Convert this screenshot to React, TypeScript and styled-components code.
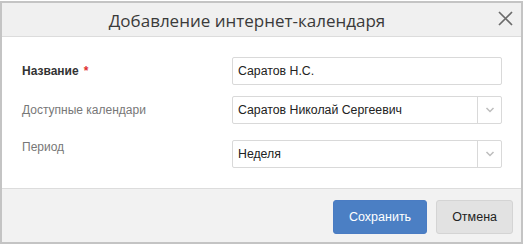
import styled, { createGlobalStyle } from 'styled-components';

const GlobalStyle = createGlobalStyle`
  *, *::before, *::after {
    box-sizing: border-box;
  }
  html, body {
    margin: 0;
    padding: 0;
    background: #ffffff;
  }
`;

export default function App() {
  return (
    <>
      <GlobalStyle />
      <Dialog>
        <Header>
          <Title>Добавление интернет-календаря</Title>
          <CloseButton aria-label="Закрыть">
            <svg width="15" height="15" viewBox="0 0 15 15">
              <path d="M1 1 L14 14 M14 1 L1 14" stroke="#6b6b6b" strokeWidth="1.7" fill="none" />
            </svg>
          </CloseButton>
        </Header>
        <Body>
          <Row>
            <Label $required>
              Название<Star>*</Star>
            </Label>
            <Field>
              <Value>Саратов Н.С.</Value>
            </Field>
          </Row>
          <Row>
            <Label>Доступные календари</Label>
            <Field>
              <Value>Саратов Николай Сергеевич</Value>
              <Chevron>
                <svg width="10" height="6" viewBox="0 0 10 6">
                  <path d="M1.5 1 L5 4.5 L8.5 1" stroke="#bdbdbd" strokeWidth="1.5" fill="none" />
                </svg>
              </Chevron>
            </Field>
          </Row>
          <Row $offset>
            <Label>Период</Label>
            <Field>
              <Value>Неделя</Value>
              <Chevron>
                <svg width="10" height="6" viewBox="0 0 10 6">
                  <path d="M1.5 1 L5 4.5 L8.5 1" stroke="#bdbdbd" strokeWidth="1.5" fill="none" />
                </svg>
              </Chevron>
            </Field>
          </Row>
        </Body>
        <Footer>
          <Button $primary>Сохранить</Button>
          <Button>Отмена</Button>
        </Footer>
      </Dialog>
    </>
  );
}

const Dialog = styled.div`
  margin-top: 1px;
  width: 523px;
  height: 243px;
  border: 2px solid #c4c4c4;
  display: flex;
  flex-direction: column;
  background: #fff;
  font-family: 'Liberation Sans', Arial, sans-serif;
`;

const Header = styled.div`
  height: 34px;
  flex-shrink: 0;
  background: #f0f0f0;
  border-bottom: 1px solid #dcdcdc;
  display: flex;
  align-items: center;
  justify-content: center;
  padding-right: 29px;
  position: relative;
`;

const Title = styled.div`
  font-family: 'Open Sans', 'Noto Sans', sans-serif;
  font-size: 17px;
  color: #3a3a3a;
  margin-top: 1px;
`;

const CloseButton = styled.button`
  position: absolute;
  right: 8px;
  top: 8px;
  width: 15px;
  height: 15px;
  padding: 0;
  border: none;
  background: none;
  display: flex;
`;

const Body = styled.div`
  flex: 1;
  padding: 20px 19px 0 20px;
  display: flex;
  flex-direction: column;
  gap: 11px;
`;

const Row = styled.div<{ $offset?: boolean }>`
  display: flex;
  align-items: ${(p) => (p.$offset ? 'flex-start' : 'center')};
  margin-top: ${(p) => (p.$offset ? '5px' : '0')};
`;

const Label = styled.div<{ $required?: boolean }>`
  width: 210px;
  font-size: 12px;
  color: ${(p) => (p.$required ? '#333' : '#777')};
  font-weight: ${(p) => (p.$required ? 'bold' : 'normal')};
`;

const Star = styled.span`
  color: #e03030;
  margin-left: 5px;
`;

const Field = styled.div`
  width: 270px;
  height: 28px;
  border: 1px solid #d9d9d9;
  border-radius: 2px;
  display: flex;
  align-items: center;
  background: #fff;
`;

const Value = styled.div`
  flex: 1;
  padding-left: 5px;
  font-size: 12.3px;
  color: #222;
`;

const Chevron = styled.div`
  width: 24px;
  height: 100%;
  border-left: 1px solid #d9d9d9;
  display: flex;
  align-items: center;
  justify-content: center;
`;

const Footer = styled.div`
  height: 54px;
  flex-shrink: 0;
  background: #f2f2f2;
  border-top: 1px solid #dcdcdc;
  display: flex;
  justify-content: flex-end;
  align-items: flex-start;
  padding: 11px 8px 0 0;
  gap: 9px;
`;

const Button = styled.button<{ $primary?: boolean }>`
  height: 34px;
  padding: 0 15px;
  border-radius: 3px;
  font-family: 'Liberation Sans', Arial, sans-serif;
  font-size: 12.5px;
  cursor: pointer;
  border: 1px solid ${(p) => (p.$primary ? '#4a7cc3' : '#d4d4d4')};
  background: ${(p) => (p.$primary ? '#4b7fc4' : '#e2e2e2')};
  color: ${(p) => (p.$primary ? '#fff' : '#222')};
`;
